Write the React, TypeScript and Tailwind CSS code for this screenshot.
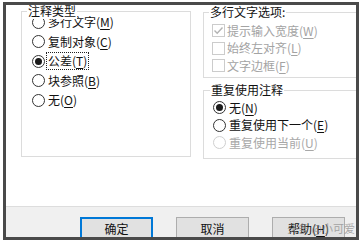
import React from "react";

function Radio({ checked = false, disabled = false }: { checked?: boolean; disabled?: boolean }) {
  return (
    <span
      className={
        disabled
          ? "flex h-[13px] w-[13px] shrink-0 items-center justify-center rounded-full border border-[#cfcfcf] bg-white"
          : "flex h-[13px] w-[13px] shrink-0 items-center justify-center rounded-full border border-[#333333] bg-white"
      }
    >
      {checked && <span className="h-[7px] w-[7px] rounded-full bg-[#1b1b1b]" />}
    </span>
  );
}

function Check({ checked = false }: { checked?: boolean }) {
  return (
    <span className="flex h-[13px] w-[13px] shrink-0 items-center justify-center border border-[#cccccc] bg-white">
      {checked && (
        <svg width="11" height="11" viewBox="0 0 11 11">
          <path d="M1.5 5.5 L4.2 8.2 L9.5 2.5" fill="none" stroke="#b3b3b3" strokeWidth="1.4" />
        </svg>
      )}
    </span>
  );
}

function Label({ text, k }: { text: string; k: string }) {
  return (
    <span className="whitespace-nowrap">
      {text}(<span className="underline underline-offset-[2px]">{k}</span>)
    </span>
  );
}

export default function App() {
  return (
    <div className="h-[241px] w-[361px] overflow-hidden bg-white pl-[3px] pt-[2px] font-['Noto_Sans_CJK_SC','Noto_Sans',sans-serif] text-[12px] leading-[16px] text-[#111111]">
      <div className="relative flex h-[238px] w-[356px] flex-col overflow-hidden border-[3px] border-[#4a4a4a]">
        <div className="flex h-[201px] shrink-0 bg-white">
          {/* left group */}
          <div className="relative ml-[15px] mt-[6px] h-[146px] w-[170px] shrink-0 border border-[#dcdcdc]">
            <span className="absolute -top-[9px] left-[5px] bg-white px-[1px]">注释类型</span>
            <div className="flex flex-col pl-[10px] pt-[0px]">
              <div className="mt-[0.5px] flex h-[19.5px] items-center gap-[3px]">
                <Radio />
                <Label text="多行文字" k="M" />
              </div>
              <div className="flex h-[19.5px] items-center gap-[3px]">
                <Radio />
                <Label text="复制对象" k="C" />
              </div>
              <div className="flex h-[19.5px] items-center gap-[2px]">
                <Radio checked />
                <span className="outline outline-1 outline-dotted outline-[#222222] px-[1px]">
                  <Label text="公差" k="T" />
                </span>
              </div>
              <div className="flex h-[19.5px] items-center gap-[3px]">
                <Radio />
                <Label text="块参照" k="B" />
              </div>
              <div className="flex h-[19.5px] items-center gap-[3px]">
                <Radio />
                <Label text="无" k="O" />
              </div>
            </div>
          </div>
          {/* right groups */}
          <div className="ml-[12px] flex w-[170px] shrink-0 flex-col">
            <div className="relative mt-[7px] h-[66px] w-[170px] border border-[#dcdcdc]">
              <span className="absolute -top-[9px] left-[5px] bg-white px-[1px]">多行文字选项:</span>
              <div className="flex flex-col pl-[8px] pt-[9px] text-[#a3a3a3]">
                <div className="flex h-[17.5px] items-center gap-[2px]">
                  <Check checked />
                  <Label text="提示输入宽度" k="W" />
                </div>
                <div className="flex h-[17.5px] items-center gap-[2px]">
                  <Check />
                  <Label text="始终左对齐" k="L" />
                </div>
                <div className="flex h-[17.5px] items-center gap-[2px]">
                  <Check />
                  <Label text="文字边框" k="F" />
                </div>
              </div>
            </div>
            <div className="relative mt-[12px] h-[69px] w-[170px] border border-[#dcdcdc]">
              <span className="absolute -top-[9px] left-[6px] bg-white px-[1px]">重复使用注释</span>
              <div className="flex flex-col pl-[9px] pt-[8px]">
                <div className="flex h-[17.5px] items-center gap-[3px]">
                  <Radio checked />
                  <Label text="无" k="N" />
                </div>
                <div className="flex h-[17.5px] items-center gap-[3px]">
                  <Radio />
                  <Label text="重复使用下一个" k="E" />
                </div>
                <div className="flex h-[17.5px] items-center gap-[3px] text-[#a8a8a8]">
                  <Radio disabled />
                  <Label text="重复使用当前" k="U" />
                </div>
              </div>
            </div>
          </div>
        </div>
        {/* bottom button bar */}
        <div className="flex flex-1 gap-[23px] border-t border-[#dddddd] bg-[#f0f0f0] pl-[74px] pt-[10px]">
          <div className="flex h-[23px] w-[73px] items-center justify-center border-2 border-[#0078d7] bg-[#e1e1e1]">
            确定
          </div>
          <div className="flex h-[23px] w-[73px] items-center justify-center border border-[#adadad] bg-[#e1e1e1]">
            取消
          </div>
          <div className="flex h-[23px] w-[73px] items-center justify-center border border-[#adadad] bg-[#e1e1e1]">
            <Label text="帮助" k="H" />
          </div>
        </div>
        <span className="pointer-events-none absolute bottom-[3px] right-[1px] whitespace-nowrap text-[11px] leading-[12px] text-[#8a8a8a] opacity-70">
          头条 @小可爱
        </span>
      </div>
    </div>
  );
}
